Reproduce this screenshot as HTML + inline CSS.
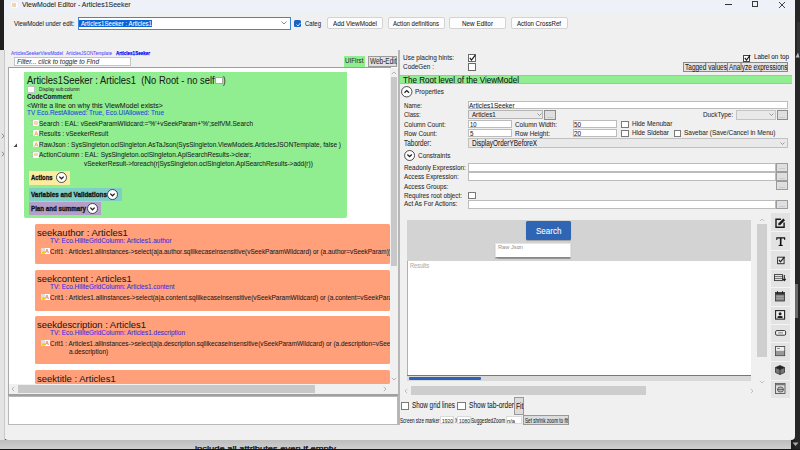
<!DOCTYPE html>
<html><head><meta charset="utf-8">
<style>
*{margin:0;padding:0;box-sizing:border-box}
html,body{width:800px;height:450px;overflow:hidden;background:#1f1f1f;font-family:"Liberation Sans",sans-serif}
.a{position:absolute}
.bm{display:inline-block;width:0;height:0}
.t b,.bd{-webkit-text-stroke:0.3px currentColor}
.t{position:absolute;white-space:nowrap;line-height:1;transform-origin:0 0;-webkit-text-stroke:0.06px currentColor}
</style></head><body>
<div class="a" style="left:0.00px;top:0.00px;width:800px;height:450px;background:#1f1f1f"></div>
<div class="a" style="left:0.00px;top:50.00px;width:5px;height:392px;background:#e4e4e4"></div>
<div class="a" style="left:0.00px;top:440.00px;width:791px;height:9px;background:linear-gradient(#bdbdbd,#cfcfcf)"></div>
<div class="a" style="left:795.00px;top:0.00px;width:5px;height:450px;background:#262626"></div>
<div class="a" style="left:4.00px;top:0.00px;width:791px;height:440px;background:#f0f0f0;border-radius:0 0 4px 4px"></div>
<svg class="a" style="left:1.00px;top:132.50px" width="4" height="6"><path d="M0.8 0.8L3.2 3L0.8 5.2" stroke="#808080" fill="none" stroke-width="0.9"/></svg>
<svg class="a" style="left:1.00px;top:150.80px" width="4" height="6"><path d="M0.8 0.8L3.2 3L0.8 5.2" stroke="#808080" fill="none" stroke-width="0.9"/></svg>
<div class="a" style="left:4.00px;top:50.00px;width:1px;height:390px;background:#c8c8c8"></div>
<div class="a" style="left:4.00px;top:0.00px;width:791px;height:13px;background:#eff1f8"></div>
<div class="a" style="left:10.50px;top:1.50px;width:7px;height:6px;background:#fbfbfb;border-radius:1.5px"></div>
<div class="a" style="left:12.00px;top:3.00px;width:4px;height:3.5px;background:#efd6ae"></div>
<div class="t" id="t0" style="left:22.40px;top:calc(0.80px + 0.20px);font-size:7.33px;color:#222;transform:scaleX(0.9499)">ViewModel Editor - Articles1Seeker</div>
<div class="a" style="left:725.00px;top:4.00px;width:7px;height:1px;background:#333"></div>
<div class="a" style="left:752.00px;top:1.20px;width:6px;height:6px;border:1px solid #3a3a3a"></div>
<svg class="a" style="left:778.00px;top:0.80px" width="8" height="8"><path d="M1 1L7 7M7 1L1 7" stroke="#333" stroke-width="0.9"/></svg>
<div class="t" id="t1" style="left:14.40px;top:calc(19.18px + 0.73px);font-size:7.94px;color:#222;transform:scaleX(0.7703)">ViewModel under edit:</div>
<div class="a" style="left:78.00px;top:17.00px;width:212.5px;height:12.5px;background:#fff;border:1px solid #3b86dc;"></div>
<div class="a" style="left:79.40px;top:19.50px;width:72.5px;height:7.5px;background:#0a64d8"></div>
<div class="t" id="t2" style="left:80.50px;top:calc(19.15px + 0.86px);font-size:8.09px;color:#fff;transform:scaleX(0.7566)">Articles1Seeker : Articles1</div>
<svg class="a" style="left:281.00px;top:21.00px" width="6" height="4"><path d="M0.5 0.5L3 3L5.5 0.5" stroke="#666" fill="none" stroke-width="0.8"/></svg>
<div class="a" style="left:294.00px;top:19.80px;width:7.2px;height:7.4px;background:#1764c4;border-radius:1.5px"></div>
<svg class="a" style="left:294.50px;top:20.50px" width="7" height="7"><path d="M1.5 3.5L3 5L5.5 2" stroke="#fff" fill="none" stroke-width="0.8"/></svg>
<div class="t" id="t3" style="left:305.00px;top:calc(19.15px + 0.86px);font-size:8.09px;color:#222;transform:scaleX(0.7420)">Categ</div>
<div class="a" style="left:326.50px;top:17.00px;width:56.10000000000002px;height:11.6px;background:#fdfdfd;border:1px solid #d3d3d3;border-radius:2px"></div>
<div class="t" id="t4" style="left:332.55px;top:calc(18.78px + 0.73px);font-size:7.94px;color:#1a1a1a;transform:scaleX(0.7998)">Add ViewModel</div>
<div class="a" style="left:387.50px;top:17.00px;width:57.0px;height:11.6px;background:#fdfdfd;border:1px solid #d3d3d3;border-radius:2px"></div>
<div class="t" id="t5" style="left:393.00px;top:calc(18.78px + 0.73px);font-size:7.94px;color:#1a1a1a;transform:scaleX(0.7665)">Action definitions</div>
<div class="a" style="left:449.00px;top:17.00px;width:56.5px;height:11.6px;background:#fdfdfd;border:1px solid #d3d3d3;border-radius:2px"></div>
<div class="t" id="t6" style="left:461.75px;top:calc(18.78px + 0.73px);font-size:7.94px;color:#1a1a1a;transform:scaleX(0.7984)">New Editor</div>
<div class="a" style="left:510.50px;top:17.00px;width:57.0px;height:11.6px;background:#fdfdfd;border:1px solid #d3d3d3;border-radius:2px"></div>
<div class="t" id="t7" style="left:517.00px;top:calc(18.78px + 0.73px);font-size:7.94px;color:#1a1a1a;transform:scaleX(0.7671)">Action CrossRef</div>
<div class="t" id="t8" style="left:10.50px;top:calc(49.83px + 0.17px);font-size:6.10px;color:#4a4aff;transform:scaleX(0.7538)">ArticlesSeekerViewModel</div>
<div class="t" id="t9" style="left:66.00px;top:calc(49.83px + 0.17px);font-size:6.10px;color:#4a4aff;transform:scaleX(0.7545)">ArticlesJSONTemplate</div>
<div class="t" id="t10" style="left:116.00px;top:calc(49.83px + 0.17px);font-size:6.10px;color:#0a0aff;font-weight:bold;-webkit-text-stroke:0.25px #0a0aff;transform:scaleX(0.7432)">Articles1Seeker</div>
<div class="a" style="left:14.00px;top:57.40px;width:117px;height:8.4px;background:#fff;border:1px solid #c4c4c4;"></div>
<div class="t" id="t11" style="left:17.00px;top:calc(57.08px + 0.72px);font-size:7.94px;color:#333;font-style:italic;transform:scaleX(0.8140)">Filter... click to toggle to Find</div>
<div class="a" style="left:343.90px;top:56.10px;width:21.4px;height:11.1px;background:#90ee90"></div>
<div class="t" id="t12" style="left:345.00px;top:calc(56.38px + 0.73px);font-size:7.94px;color:#333;transform:scaleX(0.7914)">UIFirst</div>
<div class="a" style="left:368.00px;top:55.60px;width:28.7px;height:11.6px;background:#e1e1e1;border:1px solid #9a9a9a;"></div>
<div class="t" id="t13" style="left:369.50px;top:calc(56.96px + 0.25px);font-size:8.55px;color:#333;transform:scaleX(0.7571)">Web-Edit</div>
<div class="a" style="left:397.80px;top:50.00px;width:2.2px;height:375px;background:#b6b6b6"></div>
<div class="a" style="left:8.00px;top:67.00px;width:390px;height:327px;background:#fff"></div>
<div class="a" style="left:8.00px;top:67.00px;width:383px;height:1px;background:#9e9e9e"></div>
<div class="a" style="left:8.00px;top:67.00px;width:1px;height:329px;background:#a8a8a8"></div>
<div class="a" style="left:9.00px;top:68.00px;width:381.2px;height:316px;overflow:hidden;">
<div class="a" style="left:15.20px;top:3.50px;width:322.8px;height:146.3px;background:#90ee90;border-radius:0 0 2px 2px"></div>
<div class="t" id="t14" style="left:18.10px;top:calc(7.37px + 0.54px);font-size:10.07px;color:#1a1a1a;transform:scaleX(0.9322)">Articles1Seeker : Articles1&nbsp; (No Root - no self</div>
<div class="t" id="t15" style="left:214.30px;top:calc(7.37px + 0.54px);font-size:10.07px;color:#1a1a1a;transform:scaleX(0.7740)">)</div>
<div class="a" style="left:206.00px;top:8.50px;width:8px;height:7px;background:#fff;border:1px solid #a8a8a8;"></div>
<div class="a" style="left:18.20px;top:17.50px;width:8px;height:7.5px;background:#fff;border:1px solid #c4c4c4;"></div>
<div class="t" id="t16" style="left:29.60px;top:calc(18.66px + 1.14px);font-size:4.88px;color:#333;transform:scaleX(0.9626)">Display sub column</div>
<div class="t" id="t17" style="left:18.00px;top:calc(25.45px + -0.04px);font-size:7.02px;color:#1a1a1a;font-weight:bold;transform:scaleX(0.9060)">CodeComment</div>
<div class="t" id="t18" style="left:18.00px;top:calc(33.82px + 1.09px);font-size:7.17px;color:#1a1a1a;transform:scaleX(0.9773)">&lt;Write a line on why this ViewModel exists&gt;</div>
<div class="t" id="t19" style="left:18.00px;top:calc(40.65px + -0.04px);font-size:7.02px;color:#2040e0;transform:scaleX(0.9173)">TV Eco.RestAllowed: True, Eco.UIAllowed: True</div>
<div class="a" style="left:21.80px;top:52.20px;width:2.2px;height:1px;background:#b8b8b8"></div>
<div class="a" style="left:21.80px;top:56.20px;width:2.2px;height:1px;background:#b8b8b8"></div>
<div class="a" style="left:24.40px;top:52.00px;width:5.4px;height:6px;background:#fbfbfb;border-radius:1px"></div>
<div class="a" style="left:25.40px;top:53.10px;width:3.4px;height:3.6px;background:#f8d4ac;border-radius:1px"></div>
<div class="t" id="t20" style="left:30.00px;top:calc(51.40px + 0.21px);font-size:7.33px;color:#1a1a1a;transform:scaleX(0.8812)">Search : EAL: vSeekParamWildcard:='%'+vSeekParam+'%';selfVM.Search</div>
<div class="a" style="left:21.80px;top:62.60px;width:2.2px;height:1px;background:#b8b8b8"></div>
<div class="a" style="left:21.80px;top:66.60px;width:2.2px;height:1px;background:#b8b8b8"></div>
<div class="a" style="left:24.40px;top:62.40px;width:5.4px;height:6px;background:#fbfbfb;border-radius:1px"></div>
<svg class="a" style="left:25.00px;top:62.90px" width="5" height="5"><path d="M0.6 4.6L2.3 0.5L4 4.6M1.2 3.2H3.4" stroke="#f7ad5e" stroke-width="1" fill="none"/></svg>
<div class="t" id="t21" style="left:30.00px;top:calc(61.80px + 0.20px);font-size:7.33px;color:#1a1a1a;transform:scaleX(0.8849)">Results : vSeekerResult</div>
<div class="a" style="left:21.80px;top:73.40px;width:2.2px;height:1px;background:#b8b8b8"></div>
<div class="a" style="left:21.80px;top:77.40px;width:2.2px;height:1px;background:#b8b8b8"></div>
<div class="a" style="left:24.40px;top:73.20px;width:5.4px;height:6px;background:#fbfbfb;border-radius:1px"></div>
<svg class="a" style="left:25.00px;top:73.70px" width="5" height="5"><path d="M0.6 4.6L2.3 0.5L4 4.6M1.2 3.2H3.4" stroke="#f7ad5e" stroke-width="1" fill="none"/></svg>
<div class="t" id="t22" style="left:30.00px;top:calc(72.60px + 0.21px);font-size:7.33px;color:#1a1a1a;transform:scaleX(0.8862)">RawJson : SysSingleton.oclSingleton.AsTaJson(SysSingleton.ViewModels.ArticlesJSONTemplate, false )</div>
<div class="a" style="left:21.80px;top:83.80px;width:2.2px;height:1px;background:#b8b8b8"></div>
<div class="a" style="left:21.80px;top:87.80px;width:2.2px;height:1px;background:#b8b8b8"></div>
<div class="a" style="left:24.40px;top:83.60px;width:5.4px;height:6px;background:#fbfbfb;border-radius:1px"></div>
<div class="a" style="left:25.40px;top:84.70px;width:3.4px;height:3.6px;background:#f8d4ac;border-radius:1px"></div>
<div class="t" id="t23" style="left:30.00px;top:calc(83.00px + 0.20px);font-size:7.33px;color:#1a1a1a;transform:scaleX(0.8859)">ActionColumn : EAL: SysSingleton.oclSingleton.ApiSearchResults-&gt;clear;</div>
<div class="t" id="t24" style="left:75.20px;top:calc(91.85px + -0.04px);font-size:7.02px;color:#1a1a1a;transform:scaleX(0.9215)">vSeekerResult-&gt;foreach(r|SysSingleton.oclSingleton.ApiSearchResults-&gt;add(r))</div>
<div class="a" style="left:19.70px;top:103.00px;width:41.3px;height:13.5px;background:#fcec9f"></div>
<div class="t" id="t25" style="left:21.50px;top:calc(105.74px + 0.47px);font-size:7.63px;color:#111;font-weight:bold;-webkit-text-stroke:0.3px #111;transform:scaleX(0.7687)">Actions</div>
<div class="a" style="left:19.70px;top:119.50px;width:93.3px;height:13.2px;background:#7fcfc6"></div>
<div class="t" id="t26" style="left:21.50px;top:calc(122.14px + 0.47px);font-size:7.63px;color:#111;font-weight:bold;-webkit-text-stroke:0.3px #111;transform:scaleX(0.8302)">Variables and Validations</div>
<div class="a" style="left:19.70px;top:134.20px;width:72.7px;height:13px;background:#b49fc9"></div>
<div class="t" id="t27" style="left:21.50px;top:calc(136.74px + 0.47px);font-size:7.63px;color:#111;font-weight:bold;-webkit-text-stroke:0.3px #111;transform:scaleX(0.8111)">Plan and summary</div>
<svg class="a" style="left:46.50px;top:104.30px" width="11" height="11"><circle cx="5.5" cy="5.5" r="5" fill="#fff" stroke="#222" stroke-width="0.8"/><path d="M3.3 4.6L5.5 6.8L7.7 4.6" stroke="#222" fill="none" stroke-width="1.3"/></svg>
<svg class="a" style="left:98.30px;top:120.50px" width="11" height="11"><circle cx="5.5" cy="5.5" r="5" fill="#fff" stroke="#222" stroke-width="0.8"/><path d="M3.3 4.6L5.5 6.8L7.7 4.6" stroke="#222" fill="none" stroke-width="1.3"/></svg>
<svg class="a" style="left:78.20px;top:135.20px" width="11" height="11"><circle cx="5.5" cy="5.5" r="5" fill="#fff" stroke="#222" stroke-width="0.8"/><path d="M3.3 4.6L5.5 6.8L7.7 4.6" stroke="#222" fill="none" stroke-width="1.3"/></svg>
<svg class="a" style="left:4.00px;top:74.50px" width="5" height="5"><path d="M4 0.5L4 4L0.5 4Z" fill="#444"/></svg>
<div class="a" style="left:26.20px;top:156.20px;width:355px;height:39.60000000000002px;background:#ffa07a;border-radius:1.5px"></div>
<div class="t" id="t28" style="left:28.30px;top:calc(159.53px + 0.28px);font-size:9.77px;color:#1a1a1a;transform:scaleX(0.9735)">seekauthor : Articles1</div>
<div class="t" id="t29" style="left:41.00px;top:calc(169.37px + 0.44px);font-size:6.41px;color:#3a28e6;transform:scaleX(1.0094)">TV: Eco.HiliteGridColumn: Articles1.author</div>
<div class="a" style="left:32.30px;top:180.20px;width:4px;height:5.5px;background:#ddd"></div>
<div class="a" style="left:33.00px;top:182.70px;width:3px;height:3px;background:#f5d000;border-radius:50%"></div>
<div class="a" style="left:35.50px;top:180.20px;width:5.5px;height:5.5px;background:#fff"></div>
<div class="t" id="t30" style="left:36.30px;top:calc(179.89px + 0.92px);font-size:5.80px;color:#f08020;font-weight:bold;transform:scaleX(0.9552)">A</div>
<div class="t" id="t31" style="left:41.30px;top:calc(179.37px + 0.34px);font-size:7.48px;color:#1a1a1a;transform:scaleX(0.8605)">Crit1 : Articles1.allinstances-&gt;select(a|a.author.sqllikecaseinsensitive(vSeekParamWildcard) or (a.author=vSeekParam))</div>
<div class="a" style="left:26.20px;top:202.30px;width:355px;height:40.69999999999999px;background:#ffa07a;border-radius:1.5px"></div>
<div class="t" id="t32" style="left:28.30px;top:calc(205.63px + 0.28px);font-size:9.77px;color:#1a1a1a;transform:scaleX(0.9701)">seekcontent : Articles1</div>
<div class="t" id="t33" style="left:41.00px;top:calc(215.47px + 0.43px);font-size:6.41px;color:#3a28e6;transform:scaleX(1.0104)">TV: Eco.HiliteGridColumn: Articles1.content</div>
<div class="a" style="left:32.30px;top:226.30px;width:4px;height:5.5px;background:#ddd"></div>
<div class="a" style="left:33.00px;top:228.80px;width:3px;height:3px;background:#f5d000;border-radius:50%"></div>
<div class="a" style="left:35.50px;top:226.30px;width:5.5px;height:5.5px;background:#fff"></div>
<div class="t" id="t34" style="left:36.30px;top:calc(225.99px + 0.92px);font-size:5.80px;color:#f08020;font-weight:bold;transform:scaleX(0.9552)">A</div>
<div class="t" id="t35" style="left:41.30px;top:calc(225.47px + 0.33px);font-size:7.48px;color:#1a1a1a;transform:scaleX(0.8727)">Crit1 : Articles1.allinstances-&gt;select(a|a.content.sqllikecaseinsensitive(vSeekParamWildcard) or (a.content=vSeekParam))</div>
<div class="a" style="left:26.20px;top:248.40px;width:355px;height:47.400000000000034px;background:#ffa07a;border-radius:1.5px"></div>
<div class="t" id="t36" style="left:28.30px;top:calc(251.73px + 0.28px);font-size:9.77px;color:#1a1a1a;transform:scaleX(0.9654)">seekdescription : Articles1</div>
<div class="t" id="t37" style="left:41.00px;top:calc(261.57px + 0.44px);font-size:6.41px;color:#3a28e6;transform:scaleX(1.0129)">TV: Eco.HiliteGridColumn: Articles1.description</div>
<div class="a" style="left:32.30px;top:272.40px;width:4px;height:5.5px;background:#ddd"></div>
<div class="a" style="left:33.00px;top:274.90px;width:3px;height:3px;background:#f5d000;border-radius:50%"></div>
<div class="a" style="left:35.50px;top:272.40px;width:5.5px;height:5.5px;background:#fff"></div>
<div class="t" id="t38" style="left:36.30px;top:calc(272.09px + 0.92px);font-size:5.80px;color:#f08020;font-weight:bold;transform:scaleX(0.9552)">A</div>
<div class="t" id="t39" style="left:41.30px;top:calc(271.57px + 0.34px);font-size:7.48px;color:#1a1a1a;transform:scaleX(0.8598)">Crit1 : Articles1.allinstances-&gt;select(a|a.description.sqllikecaseinsensitive(vSeekParamWildcard) or (a.description=vSeekParam or</div>
<div class="t" id="t40" style="left:59.80px;top:calc(280.00px + 0.20px);font-size:7.33px;color:#1a1a1a;transform:scaleX(0.8909)">a.description)</div>
<div class="a" style="left:26.20px;top:302.40px;width:355px;height:14px;background:#ffa07a;border-radius:1.5px"></div>
<div class="t" id="t41" style="left:28.30px;top:calc(305.73px + 0.28px);font-size:9.77px;color:#1a1a1a;transform:scaleX(0.9731)">seektitle : Articles1</div>
</div>
<div class="a" style="left:390.20px;top:67.50px;width:7.8px;height:317px;background:#f0f0f0"></div>
<div class="a" style="left:391.00px;top:77.00px;width:6px;height:189px;background:#c8c8c8"></div>
<svg class="a" style="left:391.00px;top:71.00px" width="6" height="4"><path d="M0.8 3.2L3 1L5.2 3.2" stroke="#999" fill="none" stroke-width="0.7"/></svg>
<svg class="a" style="left:391.00px;top:377.00px" width="6" height="4"><path d="M0.8 0.8L3 3L5.2 0.8" stroke="#999" fill="none" stroke-width="0.7"/></svg>
<div class="a" style="left:8.50px;top:384.00px;width:382px;height:9.5px;background:#f0f0f0"></div>
<div class="a" style="left:18.00px;top:385.00px;width:297px;height:7.5px;background:#c8c8c8"></div>
<svg class="a" style="left:11.00px;top:386.00px" width="4" height="6"><path d="M3.2 0.8L1 3L3.2 5.2" stroke="#999" fill="none" stroke-width="0.7"/></svg>
<svg class="a" style="left:383.00px;top:386.00px" width="4" height="6"><path d="M0.8 0.8L3 3L0.8 5.2" stroke="#999" fill="none" stroke-width="0.7"/></svg>
<div class="a" style="left:390.00px;top:384.00px;width:8px;height:9.5px;background:#f0f0f0"></div>
<div class="a" style="left:8.00px;top:393.50px;width:390px;height:2.5px;background:#a0a0a0"></div>
<div class="a" style="left:8.00px;top:396.00px;width:390px;height:29px;background:#fff;border:1px solid #b8b8b8;"></div>
<div class="t" id="t42" style="left:402.80px;top:calc(53.85px + -0.04px);font-size:7.02px;color:#2a2a2a;transform:scaleX(0.9210)">Use placing hints:</div>
<div class="t" id="t43" style="left:403.00px;top:calc(62.80px + 0.20px);font-size:7.33px;color:#2a2a2a;transform:scaleX(0.8744)">CodeGen :</div>
<div class="a" style="left:468.00px;top:54.40px;width:8px;height:7.5px;background:#fff;border:1px solid #6a6a6a;"></div>
<svg class="a" style="left:468.00px;top:54.00px" width="9" height="9"><path d="M1.8 3.8L3.5 6L7.2 1.2" stroke="#111" fill="none" stroke-width="1.1"/></svg>
<div class="a" style="left:468.00px;top:63.10px;width:8px;height:7.5px;background:#fff;border:1px solid #6a6a6a;"></div>
<div class="t" id="t44" style="left:753.70px;top:calc(52.28px + 0.73px);font-size:7.94px;color:#222;transform:scaleX(0.8009)">Label on top</div>
<div class="a" style="left:742.70px;top:54.50px;width:7.8px;height:7px;background:#fff;border:1px solid #444;"></div>
<svg class="a" style="left:742.70px;top:54.00px" width="9" height="9"><path d="M1.8 3.8L3.5 6L7.2 1.2" stroke="#111" fill="none" stroke-width="1.1"/></svg>
<div class="a" style="left:683.30px;top:62.30px;width:44.4px;height:9.3px;background:#e4e4e4;border:1px solid #8a8a8a;"></div>
<div class="t" id="t45" style="left:684.60px;top:calc(62.69px + 0.11px);font-size:8.39px;color:#222;transform:scaleX(0.7776)">Tagged values</div>
<div class="a" style="left:727.20px;top:62.30px;width:61.2px;height:9.3px;background:#e4e4e4;border:1px solid #8a8a8a;"></div>
<div class="t" id="t46" style="left:728.50px;top:calc(62.69px + 0.11px);font-size:8.39px;color:#222;transform:scaleX(0.7616)">Analyze expressions</div>
<div class="a" style="left:400.00px;top:75.20px;width:391.6px;height:9.1px;background:#90ee90;border-top:0.6px solid #84d884;border-bottom:0.6px solid #84d884"></div>
<div class="t" id="t47" style="left:403.00px;top:calc(74.94px + 0.76px);font-size:9.16px;color:#111;transform:scaleX(0.8811)">The Root level of the ViewModel</div>
<svg class="a" style="left:401.00px;top:86.20px" width="11.5" height="11.5"><circle cx="5.75" cy="5.75" r="5.2" fill="#fff" stroke="#222" stroke-width="0.8"/><path d="M3.5 6.8L5.75 4.6L8 6.8" stroke="#222" fill="none" stroke-width="1.3"/></svg>
<div class="t" id="t48" style="left:415.00px;top:calc(87.94px + 0.46px);font-size:7.63px;color:#2a2a2a;transform:scaleX(0.8342)">Properties</div>
<div class="t" id="t49" style="left:404.00px;top:calc(101.08px + 0.72px);font-size:7.94px;color:#2a2a2a;transform:scaleX(0.7695)">Name:</div>
<div class="t" id="t50" style="left:404.00px;top:calc(110.41px + 0.59px);font-size:7.78px;color:#2a2a2a;transform:scaleX(0.7786)">Class:</div>
<div class="t" id="t51" style="left:404.00px;top:calc(120.18px + 0.73px);font-size:7.94px;color:#2a2a2a;transform:scaleX(0.7875)">Column Count:</div>
<div class="t" id="t52" style="left:404.00px;top:calc(129.18px + 0.73px);font-size:7.94px;color:#2a2a2a;transform:scaleX(0.7955)">Row Count:</div>
<div class="t" id="t53" style="left:404.00px;top:calc(138.62px + 0.99px);font-size:8.24px;color:#2a2a2a;transform:scaleX(0.7817)">Taborder:</div>
<div class="a" style="left:468.00px;top:100.90px;width:320px;height:8.3px;background:#fff;border:1px solid #bcbcbc;"></div>
<div class="t" id="t54" style="left:469.40px;top:calc(101.60px + 0.21px);font-size:7.33px;color:#222;transform:scaleX(0.8884)">Articles1Seeker</div>
<div class="a" style="left:468.00px;top:109.90px;width:75px;height:9.6px;background:#e9e9e9;border:1px solid #b4b4b4;"></div>
<div class="t" id="t55" style="left:471.90px;top:calc(111.05px + -0.05px);font-size:7.02px;color:#222;transform:scaleX(0.8808)">Articles1</div>
<svg class="a" style="left:536.50px;top:113.00px" width="5" height="3"><path d="M0.5 0.5L2.5 2.5L4.5 0.5" stroke="#777" fill="none" stroke-width="0.7"/></svg>
<div class="a" style="left:544.40px;top:109.50px;width:11.2px;height:10px;background:#dfdfdf;border:1px solid #8c8c8c;"></div>
<div class="t" id="t56" style="left:547.00px;top:calc(114.83px + 0.97px);font-size:3.51px;color:#888;transform:scaleX(2.0535)">...</div>
<div class="t" id="t57" style="left:703.00px;top:calc(110.74px + 0.47px);font-size:7.63px;color:#2a2a2a;transform:scaleX(0.8326)">DuckType:</div>
<div class="a" style="left:735.50px;top:109.50px;width:40.5px;height:10.2px;background:#e9e9e9;border:1px solid #c4c4c4;"></div>
<svg class="a" style="left:769.00px;top:113.00px" width="5" height="3"><path d="M0.5 0.5L2.5 2.5L4.5 0.5" stroke="#777" fill="none" stroke-width="0.7"/></svg>
<div class="a" style="left:776.50px;top:109.50px;width:11.5px;height:10.2px;background:#dfdfdf;border:1px solid #8c8c8c;"></div>
<div class="t" id="t58" style="left:779.00px;top:calc(114.83px + 0.97px);font-size:3.51px;color:#888;transform:scaleX(2.0535)">...</div>
<div class="a" style="left:468.00px;top:120.25px;width:43.5px;height:7.8px;background:#fff;border:1px solid #bcbcbc;"></div>
<div class="t" id="t59" style="left:469.50px;top:calc(120.29px + 0.47px);font-size:7.63px;color:#222;transform:scaleX(0.7661)">10</div>
<div class="a" style="left:468.00px;top:129.25px;width:43.5px;height:7.8px;background:#fff;border:1px solid #bcbcbc;"></div>
<div class="t" id="t60" style="left:469.50px;top:calc(129.29px + 0.47px);font-size:7.63px;color:#222;transform:scaleX(0.8235)">5</div>
<div class="t" id="t61" style="left:515.00px;top:calc(120.57px + 0.34px);font-size:7.48px;color:#2a2a2a;transform:scaleX(0.8574)">Column Width:</div>
<div class="t" id="t62" style="left:515.00px;top:calc(129.57px + 0.34px);font-size:7.48px;color:#2a2a2a;transform:scaleX(0.8602)">Row Height:</div>
<div class="a" style="left:572.70px;top:120.40px;width:44px;height:7.6px;background:#fff;border:1px solid #bcbcbc;"></div>
<div class="t" id="t63" style="left:574.00px;top:calc(120.29px + 0.47px);font-size:7.63px;color:#222;transform:scaleX(0.8250)">50</div>
<div class="a" style="left:572.70px;top:129.20px;width:44px;height:7.8px;background:#fff;border:1px solid #bcbcbc;"></div>
<div class="t" id="t64" style="left:574.00px;top:calc(129.29px + 0.47px);font-size:7.63px;color:#222;transform:scaleX(0.8250)">20</div>
<div class="a" style="left:621.00px;top:121.00px;width:7.6px;height:7.2px;background:#fff;border:1px solid #7a7a7a;"></div>
<div class="t" id="t65" style="left:631.80px;top:calc(119.14px + 0.47px);font-size:7.63px;color:#2a2a2a;transform:scaleX(0.8412)">Hide Menubar</div>
<div class="a" style="left:621.00px;top:130.00px;width:7.6px;height:7.2px;background:#fff;border:1px solid #7a7a7a;"></div>
<div class="t" id="t66" style="left:631.80px;top:calc(128.08px + 0.72px);font-size:7.94px;color:#2a2a2a;transform:scaleX(0.8063)">Hide Sidebar</div>
<div class="a" style="left:673.50px;top:130.00px;width:7.2px;height:7.2px;background:#fff;border:1px solid #7a7a7a;"></div>
<div class="t" id="t67" style="left:683.70px;top:calc(128.08px + 0.72px);font-size:7.94px;color:#2a2a2a;transform:scaleX(0.8132)">Savebar (Save/Cancel in Menu)</div>
<div class="a" style="left:468.00px;top:137.90px;width:320px;height:10.5px;background:#e9e9e9;border:1px solid #c0c0c0;"></div>
<div class="t" id="t68" style="left:471.90px;top:calc(138.86px + 0.24px);font-size:8.55px;color:#222;transform:scaleX(0.7517)">DisplayOrderYBeforeX</div>
<svg class="a" style="left:780.00px;top:142.00px" width="5" height="3"><path d="M0.5 0.5L2.5 2.5L4.5 0.5" stroke="#777" fill="none" stroke-width="0.7"/></svg>
<svg class="a" style="left:404.20px;top:149.70px" width="11.2" height="11"><circle cx="5.6" cy="5.5" r="5" fill="#fff" stroke="#222" stroke-width="0.8"/><path d="M3.4 4.5L5.6 6.7L7.8 4.5" stroke="#222" fill="none" stroke-width="1.3"/></svg>
<div class="t" id="t69" style="left:418.20px;top:calc(151.31px + 0.60px);font-size:7.78px;color:#2a2a2a;transform:scaleX(0.8248)">Constraints</div>
<div class="t" id="t70" style="left:404.00px;top:calc(163.01px + 0.60px);font-size:7.78px;color:#2a2a2a;transform:scaleX(0.8180)">Readonly Expression:</div>
<div class="t" id="t71" style="left:404.00px;top:calc(172.71px + 0.60px);font-size:7.78px;color:#2a2a2a;transform:scaleX(0.8072)">Access Expression:</div>
<div class="t" id="t72" style="left:404.00px;top:calc(182.31px + 0.60px);font-size:7.78px;color:#2a2a2a;transform:scaleX(0.8119)">Access Groups:</div>
<div class="t" id="t73" style="left:404.00px;top:calc(191.51px + 0.60px);font-size:7.78px;color:#2a2a2a;transform:scaleX(0.8094)">Requires root object:</div>
<div class="t" id="t74" style="left:404.00px;top:calc(199.81px + 0.60px);font-size:7.78px;color:#2a2a2a;transform:scaleX(0.8194)">Act As For Actions:</div>
<div class="a" style="left:468.30px;top:162.50px;width:307.7px;height:9.0px;background:#fff;border:1px solid #bcbcbc;"></div>
<div class="a" style="left:776.00px;top:162.50px;width:12px;height:9.0px;background:#dfdfdf;border:1px solid #9c9c9c;"></div>
<div class="t" id="t75" style="left:778.50px;top:calc(165.77px + 1.23px);font-size:3.82px;color:#888;transform:scaleX(1.8824)">...</div>
<div class="a" style="left:468.30px;top:171.50px;width:307.7px;height:9.800000000000011px;background:#fff;border:1px solid #bcbcbc;"></div>
<div class="a" style="left:776.00px;top:171.50px;width:12px;height:9.800000000000011px;background:#dfdfdf;border:1px solid #9c9c9c;"></div>
<div class="t" id="t76" style="left:778.50px;top:calc(175.57px + 1.24px);font-size:3.82px;color:#888;transform:scaleX(1.8824)">...</div>
<div class="a" style="left:776.00px;top:181.30px;width:12px;height:9.199999999999989px;background:#dfdfdf;border:1px solid #9c9c9c;"></div>
<div class="t" id="t77" style="left:778.50px;top:calc(184.77px + 1.23px);font-size:3.82px;color:#888;transform:scaleX(1.8824)">...</div>
<div class="a" style="left:468.30px;top:200.00px;width:307.7px;height:9.199999999999989px;background:#fff;border:1px solid #bcbcbc;"></div>
<div class="a" style="left:776.00px;top:200.00px;width:12px;height:9.199999999999989px;background:#dfdfdf;border:1px solid #9c9c9c;"></div>
<div class="t" id="t78" style="left:778.50px;top:calc(203.47px + 1.23px);font-size:3.82px;color:#888;transform:scaleX(1.8824)">...</div>
<div class="a" style="left:468.00px;top:191.70px;width:8px;height:7.3px;background:#fff;border:1px solid #7a7a7a;"></div>
<div class="a" style="left:407.00px;top:220.00px;width:344px;height:40.5px;background:#d3d3d3"></div>
<div class="a" style="left:526.30px;top:221.30px;width:44.5px;height:18.7px;background:#2f65b3;border-radius:1.5px;box-shadow:0 1px 1px rgba(0,0,0,.25)"></div>
<div class="t" id="t79" style="left:535.50px;top:calc(226.91px + 0.39px);font-size:8.72px;color:#fff;transform:scaleX(0.9231)">Search</div>
<div class="a" style="left:495.00px;top:242.50px;width:75.8px;height:15.2px;background:#fff;border:1px solid #e4e4e4;border-bottom:1px solid #888;box-shadow:0 0.5px 1px rgba(0,0,0,.3)"></div>
<div class="t" id="t80" style="left:498.00px;top:calc(243.60px + 0.31px);font-size:6.26px;color:#999;transform:scaleX(0.9106)">Raw Json</div>
<div class="a" style="left:407.00px;top:260.50px;width:344px;height:115px;background:#fff;border-left:1px solid #b0b0b0"></div>
<div class="a" style="left:407.00px;top:374.50px;width:344px;height:1px;background:#777"></div>
<div class="t" id="t81" style="left:410.00px;top:calc(262.57px + 0.44px);font-size:6.41px;color:#aaa;transform:scaleX(0.8889)">Results</div>
<div class="a" style="left:407.00px;top:375.50px;width:344px;height:5px;background:#d9d9d9"></div>
<div class="a" style="left:408.80px;top:377.40px;width:72.1px;height:2.4px;background:#2a62b8;border-radius:1px"></div>
<div class="a" style="left:757.00px;top:224.00px;width:10px;height:133px;background:#cfcfcf"></div>
<svg class="a" style="left:759.00px;top:217.50px" width="6" height="4"><path d="M0.8 3.2L3 1L5.2 3.2" stroke="#aaa" fill="none" stroke-width="0.7"/></svg>
<svg class="a" style="left:759.00px;top:379.50px" width="6" height="4"><path d="M0.8 0.8L3 3L5.2 0.8" stroke="#aaa" fill="none" stroke-width="0.7"/></svg>
<div class="a" style="left:411.00px;top:386.00px;width:234.7px;height:9.4px;background:#cdcdcd"></div>
<svg class="a" style="left:404.00px;top:388.00px" width="4" height="6"><path d="M3.2 0.8L1 3L3.2 5.2" stroke="#aaa" fill="none" stroke-width="0.7"/></svg>
<svg class="a" style="left:750.00px;top:388.00px" width="4" height="6"><path d="M0.8 0.8L3 3L0.8 5.2" stroke="#aaa" fill="none" stroke-width="0.7"/></svg>
<div class="a" style="left:795.00px;top:284.00px;width:2.5px;height:34px;background:#6a6a6a"></div>
<div class="a" style="left:797.00px;top:22.00px;width:3px;height:33px;background:#333"></div>
<svg class="a" style="left:795.00px;top:52.00px" width="5" height="6"><path d="M0.5 5.5L3 0.5L4.5 5.5Z" fill="#bbb"/></svg>
<div class="a" style="left:771.00px;top:213.00px;width:18.6px;height:184.5px;background:#e3e3e3"></div>
<div class="a" style="left:771.00px;top:231.30px;width:19px;height:0.8px;background:#f4f4f4"></div>
<div class="a" style="left:771.00px;top:250.00px;width:19px;height:0.8px;background:#f4f4f4"></div>
<div class="a" style="left:771.00px;top:268.90px;width:19px;height:0.8px;background:#f4f4f4"></div>
<div class="a" style="left:771.00px;top:287.40px;width:19px;height:0.8px;background:#f4f4f4"></div>
<div class="a" style="left:771.00px;top:306.00px;width:19px;height:0.8px;background:#f4f4f4"></div>
<div class="a" style="left:771.00px;top:323.60px;width:19px;height:0.8px;background:#f4f4f4"></div>
<div class="a" style="left:771.00px;top:342.20px;width:19px;height:0.8px;background:#f4f4f4"></div>
<div class="a" style="left:771.00px;top:360.90px;width:19px;height:0.8px;background:#f4f4f4"></div>
<div class="a" style="left:771.00px;top:379.50px;width:19px;height:0.8px;background:#f4f4f4"></div>
<svg class="a" style="left:775.00px;top:217.50px" width="12" height="12"><path d="M6 1.2H1V9.3H9.1V4.5" fill="none" stroke="#1a1a1a" stroke-width="1.4"/><path d="M3.2 7.2L3.6 5.2L8.3 0.5L10 2.2L5.3 6.9Z" fill="#1a1a1a"/></svg>
<svg class="a" style="left:775.50px;top:236.50px" width="12" height="12"><path d="M0.3 0.2H9.2V3H8.4L8 1.6H5.5V7.8L6.8 8.2V9H2.6V8.2L3.9 7.8V1.6H1.5L1.1 3H0.3Z" fill="#111"/></svg>
<svg class="a" style="left:776.50px;top:255.50px" width="12" height="12"><rect x="0.6" y="1.2" width="6.5" height="6.5" fill="#e8e8e8" stroke="#333" stroke-width="1"/><path d="M2 4L3.5 5.8L7.5 1" stroke="#222" fill="none" stroke-width="1.2"/></svg>
<svg class="a" style="left:774.00px;top:273.80px" width="12" height="12"><rect x="0.5" y="0.6" width="8" height="6" fill="#eee" stroke="#333" stroke-width="0.9"/><path d="M0.5 2.6H8.5M0.5 4.6H8.5" stroke="#333" stroke-width="0.7"/><path d="M10.3 1V6M8.8 4.8L10.3 6.6L11.8 4.8" stroke="#222" stroke-width="1.1" fill="none"/></svg>
<svg class="a" style="left:775.20px;top:290.50px" width="12" height="12"><rect x="0.5" y="1.5" width="9" height="8.5" fill="#888" stroke="#333" stroke-width="0.8"/><rect x="0.5" y="1.5" width="9" height="2.2" fill="#333"/><path d="M2.5 0.2V2.5M7.5 0.2V2.5" stroke="#222" stroke-width="1"/><path d="M1.5 5.5H8.5M1.5 7.5H8.5" stroke="#bbb" stroke-width="0.5"/></svg>
<svg class="a" style="left:775.00px;top:309.50px" width="12" height="12"><rect x="0.6" y="0.6" width="9" height="8.5" fill="#eee" stroke="#222" stroke-width="1.1"/><circle cx="5.1" cy="3.8" r="1.5" fill="#222"/><path d="M2.5 8V6.5Q5 5 7.6 6.5V8Z" fill="#222"/></svg>
<svg class="a" style="left:774.80px;top:330.20px" width="12" height="12"><rect x="0.6" y="0.6" width="10" height="4.6" rx="1.2" fill="#f4f4f4" stroke="#333" stroke-width="1"/><path d="M3 2.9H8" stroke="#555" stroke-width="0.8"/></svg>
<svg class="a" style="left:775.20px;top:346.00px" width="12" height="12"><rect x="0.5" y="0.5" width="9.2" height="9.2" fill="#999" stroke="#444" stroke-width="0.8"/><rect x="1" y="1" width="8.2" height="3.8" fill="#eee"/><path d="M2 2.5H5" stroke="#555" stroke-width="0.6"/></svg>
<svg class="a" style="left:775.00px;top:364.80px" width="12" height="12"><path d="M5 0.5L9.5 2.5V7.5L5 9.5L0.5 7.5V2.5Z" fill="#777" stroke="#333" stroke-width="0.8"/><path d="M0.5 2.5L5 4.5L9.5 2.5M5 4.5V9.5" stroke="#222" stroke-width="0.8" fill="none"/><path d="M0.8 2.5L5 0.8L9.2 2.5L5 4.2Z" fill="#222"/></svg>
<svg class="a" style="left:775.00px;top:382.50px" width="12" height="12"><rect x="0.5" y="0.5" width="9.5" height="10" fill="#ddd" stroke="#444" stroke-width="0.8"/><rect x="0.5" y="0.5" width="9.5" height="1.8" fill="#777"/><ellipse cx="5.5" cy="6.5" rx="3" ry="2.5" fill="#bbb" stroke="#333" stroke-width="0.7"/><path d="M2.5 6.5H8.5" stroke="#333" stroke-width="0.6"/></svg>
<div class="a" style="left:400.70px;top:402.00px;width:8.1px;height:8px;background:#fff;border:1px solid #7a7a7a;"></div>
<div class="t" id="t82" style="left:412.00px;top:calc(399.74px + 0.77px);font-size:9.16px;color:#222;transform:scaleX(0.6925)">Show grid lines</div>
<div class="a" style="left:457.00px;top:402.00px;width:9px;height:8px;background:#fff;border:1px solid #7a7a7a;"></div>
<div class="t" id="t83" style="left:469.00px;top:calc(399.74px + 0.77px);font-size:9.16px;color:#222;transform:scaleX(0.7187)">Show tab-order</div>
<div class="a" style="left:514.40px;top:397.20px;width:9.3px;height:17.8px;background:#dcdcdc;border:1px solid #999;"></div>
<div class="t" id="t84" style="left:515.50px;top:calc(401.00px + 0.00px);font-size:9.45px;color:#222;transform:scaleX(0.7154)">Fit</div>
<div class="t" id="t85" style="left:400.00px;top:calc(417.07px + 0.44px);font-size:6.41px;color:#222;transform:scaleX(0.7157)">Screen size marker</div>
<div class="a" style="left:440.30px;top:416.40px;width:14px;height:8px;background:#fff;border:1px solid #dadada;"></div>
<div class="t" id="t86" style="left:441.50px;top:calc(417.33px + 0.17px);font-size:6.10px;color:#333;transform:scaleX(0.8111)">1920</div>
<div class="t" id="t87" style="left:454.80px;top:calc(417.07px + 0.44px);font-size:6.41px;color:#222;transform:scaleX(0.5839)">X</div>
<div class="a" style="left:457.00px;top:416.40px;width:14.2px;height:8px;background:#fff;border:1px solid #dadada;"></div>
<div class="t" id="t88" style="left:458.50px;top:calc(417.33px + 0.17px);font-size:6.10px;color:#333;transform:scaleX(0.8111)">1080</div>
<div class="t" id="t89" style="left:471.30px;top:calc(417.07px + 0.44px);font-size:6.41px;color:#222;transform:scaleX(0.7232)">SuggestedZoom</div>
<div class="a" style="left:505.70px;top:416.40px;width:16.8px;height:8px;background:#fff;border:1px solid #dadada;"></div>
<div class="t" id="t90" style="left:507.00px;top:calc(417.33px + 0.17px);font-size:6.10px;color:#333;transform:scaleX(0.9429)">n/a</div>
<div class="a" style="left:523.40px;top:415.00px;width:45.8px;height:10.4px;background:#dcdcdc;border:1px solid #999;"></div>
<div class="t" id="t91" style="left:525.00px;top:calc(417.07px + 0.44px);font-size:6.41px;color:#222;transform:scaleX(0.7187)">Set shrink zoom to fit</div>
<div class="t" id="t92" style="left:195.00px;top:calc(445.12px + 1.09px);font-size:7.17px;color:#111;-webkit-text-stroke:0.25px #111;transform:scaleX(1.3078)">include all attributes even if empty</div>
<svg class="a" style="left:792.00px;top:442.00px" width="7" height="5"><path d="M0.5 0.5L6.5 0.5L3.5 4Z" fill="#aaa"/></svg>
<div class="a" style="left:0.00px;top:448.50px;width:800px;height:1.5px;background:#161616"></div>
</body></html>
